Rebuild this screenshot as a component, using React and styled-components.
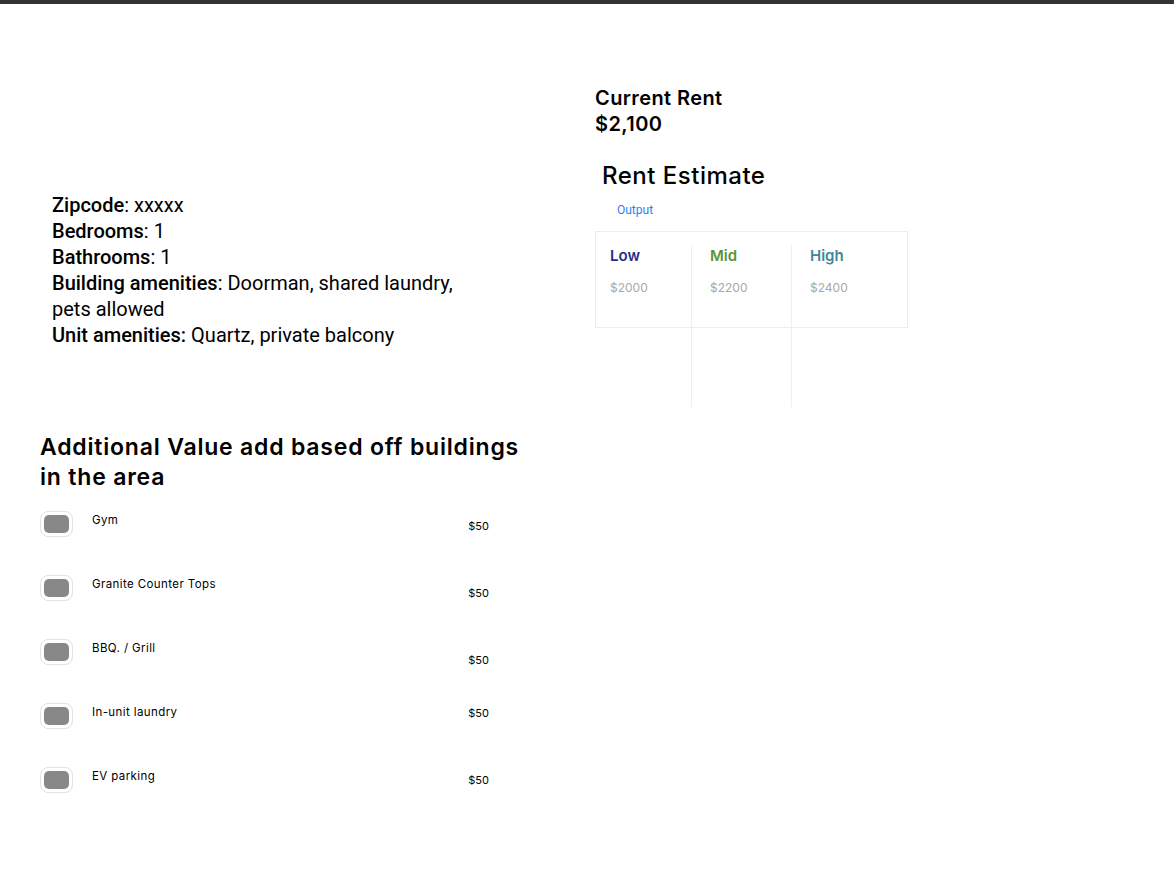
import React from 'react'
import styled, { createGlobalStyle } from 'styled-components'

const GlobalStyle = createGlobalStyle`
body {
  margin: 0;
  background: #fff;
  font-family: Roboto, "Liberation Sans", sans-serif;
  color: #000;
}
`;

const HEAD = `Inter, "Noto Sans", sans-serif`;

const Page = styled.div`
border-top: 4px solid #333;
min-height: 876px;
`;

const Top = styled.div`
display: flex;
`;

const Left = styled.div`
width: 543px;
padding-left: 52px;
padding-top: 188px;
`;

const Info = styled.div`
width: 410px;
font-size: 20px;
line-height: 26px;
`;

const Label = styled.span`
font-weight: 500;
`;

const Right = styled.div`
padding-top: 81px;
padding-bottom: 80px;
`;

const CurrentRent = styled.div`
font-family: ${HEAD};
font-weight: 600;
font-size: 20px;
line-height: 26px;
letter-spacing: 0.4px;
`;

const EstimateTitle = styled.div`
font-family: ${HEAD};
font-weight: 500;
font-size: 24px;
line-height: 32px;
letter-spacing: 0.5px;
margin-top: 23px;
margin-left: 7px;
`;

const Output = styled.div`
font-size: 12px;
line-height: 16px;
color: #2d7ff9;
margin-top: 10px;
margin-left: 22px;
`;

const Box = styled.div`
margin-top: 13px;
width: 311px;
height: 95px;
border: 1px solid #ececec;
`;

const Columns = styled.div`
display: flex;
margin-top: 13px;
height: 162px;
`;

const Column = styled.div`
width: ${p => p.$w}px;
padding-left: 18px;
box-sizing: border-box;
border-right: 1px solid ${p => p.$last ? 'transparent' : '#efefef'};
&:first-child {
  padding-left: 14px;
}
`;

const ColTitle = styled.div`
font-family: ${HEAD};
font-weight: 600;
font-size: 15px;
line-height: 22px;
color: ${p => p.$color};
`;

const ColValue = styled.div`
font-family: ${HEAD};
font-size: 12px;
line-height: 16px;
color: #a8a8a8;
margin-top: 13px;
`;

const Bottom = styled.div`
padding-left: 40px;
margin-top: 24px;
`;

const Heading = styled.h2`
margin: 0;
width: 492px;
font-family: ${HEAD};
font-weight: 600;
font-size: 23px;
line-height: 30px;
letter-spacing: 0.8px;
`;

const List = styled.div`
margin-top: 19px;
width: 449px;
`;

const Row = styled.div`
display: grid;
grid-template-columns: 33px 1fr auto;
column-gap: 19px;
height: 64px;
align-items: start;
`;

const Check = styled.div`
width: 33px;
height: 26px;
box-sizing: border-box;
border: 1px solid #e2e2e2;
border-radius: 8px;
padding: 3px;
background: #fff;
`;

const CheckFill = styled.div`
width: 100%;
height: 100%;
background: #888;
border-radius: 5px;
`;

const ItemName = styled.div`
font-family: ${HEAD};
font-size: 11.5px;
line-height: 18px;
letter-spacing: 0.4px;
`;

const Price = styled.div`
font-family: ${HEAD};
font-size: 11px;
line-height: 18px;
margin-top: ${p => p.$drop}px;
`;

const tiers = [
  { name: 'Low', value: '$2000', color: '#1f2d84', w: 96 },
  { name: 'Mid', value: '$2200', color: '#5b9237', w: 100 },
  { name: 'High', value: '$2400', color: '#3f8791', w: 115 },
];

const extras = [
  { name: 'Gym', drop: 6 },
  { name: 'Granite Counter Tops', drop: 9 },
  { name: 'BBQ. / Grill', drop: 12 },
  { name: 'In-unit laundry', drop: 1 },
  { name: 'EV parking', drop: 4 },
];

const App = () => {
  return (
    <Page>
      <GlobalStyle />
      <Top>
        <Left>
          <Info>
            <div><Label>Zipcode</Label>: xxxxx</div>
            <div><Label>Bedrooms</Label>: 1</div>
            <div><Label>Bathrooms</Label>: 1</div>
            <div><Label>Building amenities</Label>: Doorman, shared laundry, pets allowed</div>
            <div><Label>Unit amenities:</Label> Quartz, private balcony</div>
          </Info>
        </Left>
        <Right>
          <CurrentRent>Current Rent<br />$2,100</CurrentRent>
          <EstimateTitle>Rent Estimate</EstimateTitle>
          <Output>Output</Output>
          <Box>
            <Columns>
              {tiers.map((t, i) => (
                <Column key={t.name} $w={t.w} $last={i === tiers.length - 1}>
                  <ColTitle $color={t.color}>{t.name}</ColTitle>
                  <ColValue>{t.value}</ColValue>
                </Column>
              ))}
            </Columns>
          </Box>
        </Right>
      </Top>
      <Bottom>
        <Heading>Additional Value add based off buildings in the area</Heading>
        <List>
          {extras.map(e => (
            <Row key={e.name}>
              <Check><CheckFill /></Check>
              <ItemName>{e.name}</ItemName>
              <Price $drop={e.drop}>$50</Price>
            </Row>
          ))}
        </List>
      </Bottom>
    </Page>
  );
}

export default App;
